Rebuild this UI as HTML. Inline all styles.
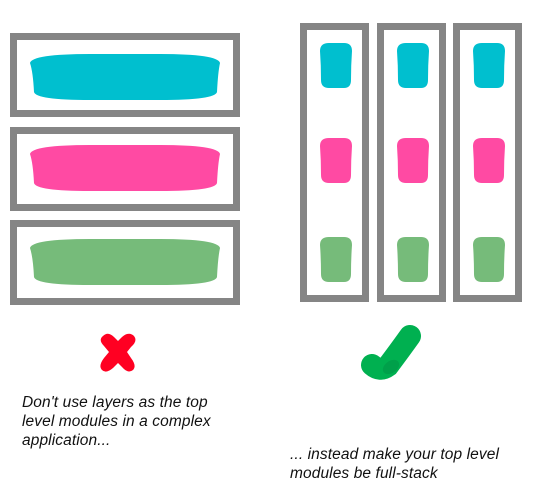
<!DOCTYPE html>
<html><head><style>
body{margin:0;width:541px;height:501px;background:#fff;position:relative;overflow:hidden;font-family:"Liberation Sans",sans-serif}
.b{position:absolute;border:7px solid #858585;box-sizing:border-box}
.t{position:absolute;font-style:italic;font-size:15.5px;line-height:19px;color:#111;letter-spacing:0.1px}
</style></head><body>
<div class="b" style="left:10px;top:33px;width:230px;height:84px"></div>
<div class="b" style="left:10px;top:127px;width:230px;height:84px"></div>
<div class="b" style="left:10px;top:220px;width:230px;height:85px"></div>
<div class="b" style="left:300px;top:23px;width:69px;height:279px"></div>
<div class="b" style="left:377px;top:23px;width:69px;height:279px"></div>
<div class="b" style="left:453px;top:23px;width:69px;height:279px"></div>
<svg width="541" height="501" style="position:absolute;left:0;top:0">
<defs>
<path id="lb" d="M30,63 Q32,54 90,54 L160,54 Q218,54 220,63 Q218,72 217,92 Q215,100 160,100 L90,100 Q36,100 34,92 Q33,72 30,63Z"/>
<path id="sb" d="M329,43 L344,43 Q352,43 352,51 Q351,65 351,80 Q351,88 344,88 L329,88 Q321,88 321,80 Q321,65 320,51 Q320,43 329,43Z"/>
</defs>
<use href="#lb" fill="#00bfcf"/>
<use href="#lb" fill="#ff4aa3" y="91"/>
<use href="#lb" fill="#76bb7a" y="185"/>
<g fill="#00bfcf"><use href="#sb"/><use href="#sb" x="77"/><use href="#sb" x="153"/></g>
<g fill="#ff4aa3"><use href="#sb" y="95"/><use href="#sb" x="77" y="95"/><use href="#sb" x="153" y="95"/></g>
<g fill="#76bb7a"><use href="#sb" y="194"/><use href="#sb" x="77" y="194"/><use href="#sb" x="153" y="194"/></g>
<path d="M103,336 Q108,331 114,337 L118,341 L122,337 Q129,331 134,336 Q138,341 131,347 L127,352 L131,358 Q137,366 133,370 Q128,374 122,367 L118,363 L113,368 Q106,374 102,370 Q98,366 104,358 L109,352 L104,346 Q98,340 103,336Z" fill="#ff0022"/>
<path d="M372,365 Q380,372 388,366 Q400,350 410,336" stroke="#00b050" stroke-width="22" stroke-linecap="round" fill="none"/>
<ellipse cx="391" cy="367" rx="9" ry="6" fill="#00a04a" transform="rotate(-35 391 367)"/>
</svg>
<div class="t" style="left:22px;top:393px">Don't use layers as the top<br>level modules in a complex<br>application...</div>
<div class="t" style="left:290px;top:445px">... instead make your top level<br>modules be full-stack</div>
</body></html>
